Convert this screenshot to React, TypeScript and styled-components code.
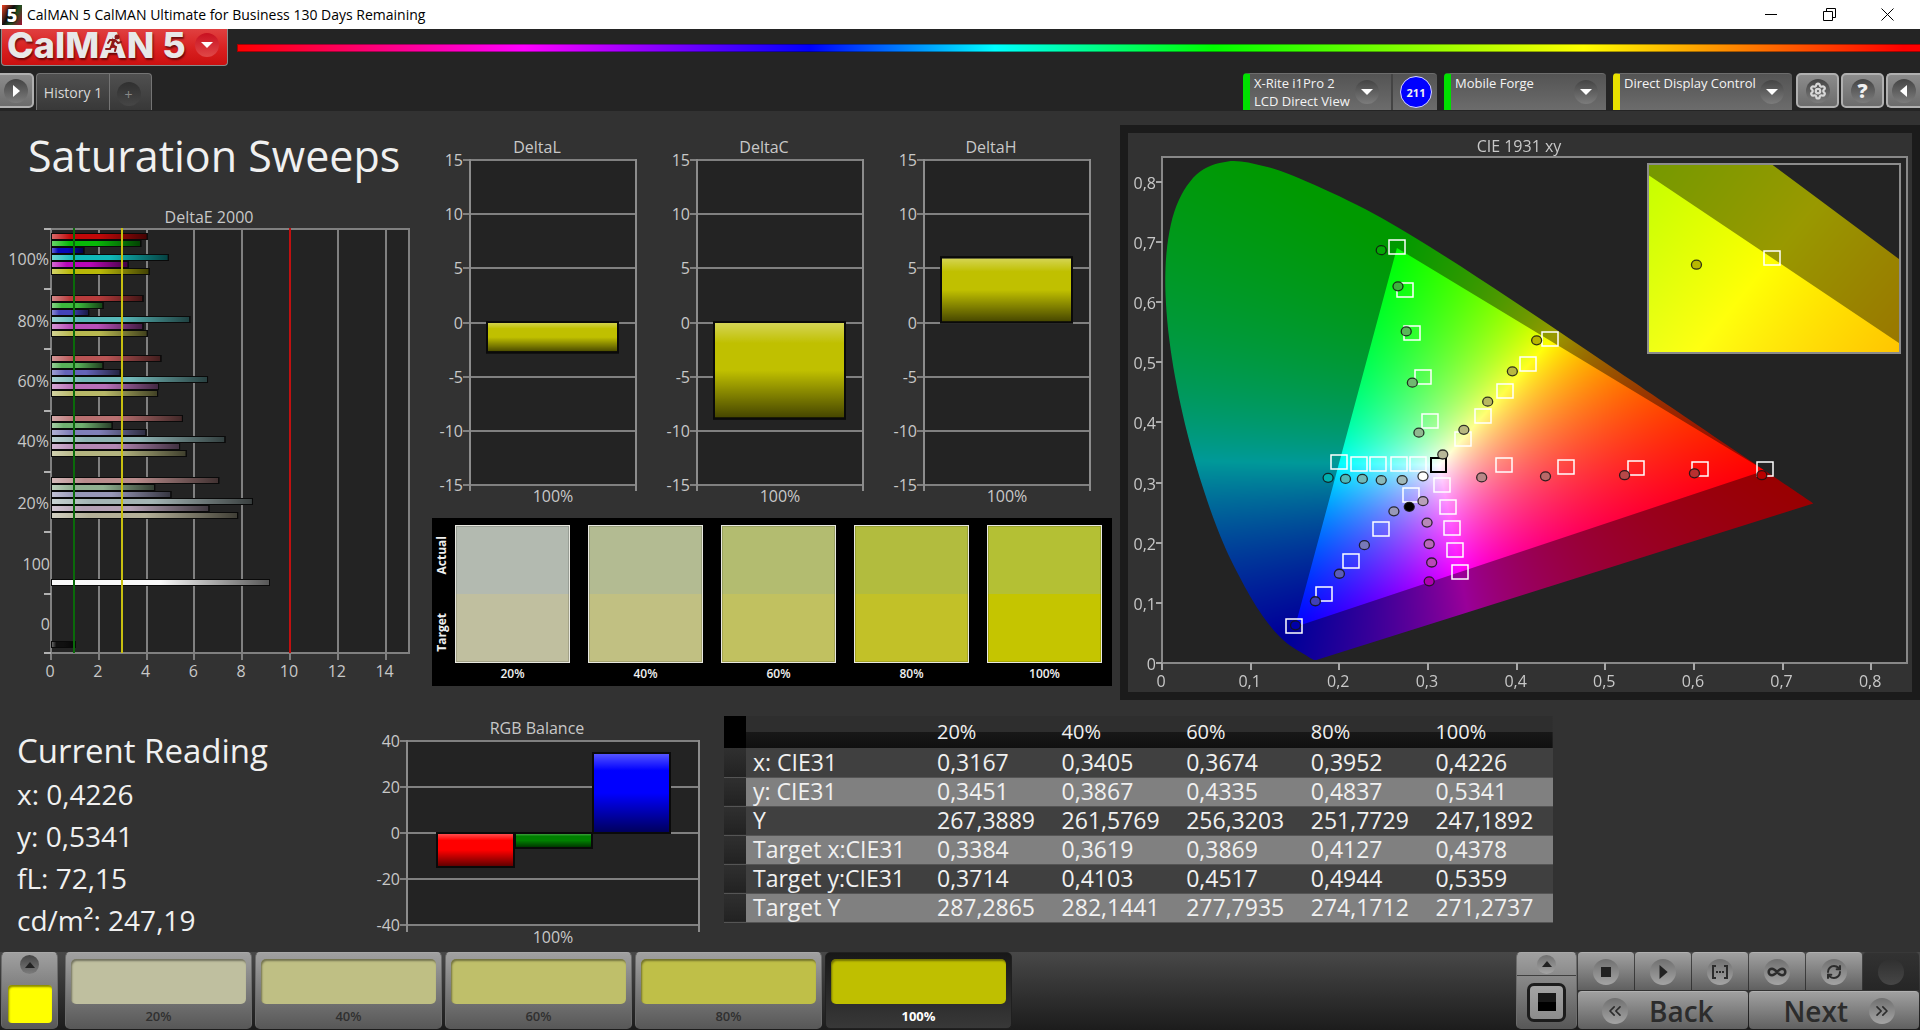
import React, { useEffect, useRef } from "react";
import styled, { createGlobalStyle, css } from "styled-components";
import { ChevronsLeft, ChevronsRight, Infinity as InfinityIcon, RefreshCw, Settings } from "lucide-react";

const GlobalStyle = createGlobalStyle`
  *, *::before, *::after { box-sizing: border-box; }
  body {
    margin: 0;
    background: #323232;
    color: #f0f0f0;
    font-family: "Open Sans", "Noto Sans", sans-serif;
  }
  button { font: inherit; color: inherit; padding: 0; border: 0; cursor: pointer; }
  h1, h2, p { margin: 0; font-weight: 400; }
`;

/* ---------- window frame ---------- */

const Page = styled.div`
  display: flex;
  flex-direction: column;
  min-height: 100vh;
`;

const TitleBar = styled.div`
  display: flex;
  align-items: center;
  height: 29px;
  padding: 0 4px 0 2px;
  background: #fff;
  color: #000;
  font-size: 14px;
`;

const AppIcon = styled.span`
  display: grid;
  place-items: center;
  width: 20px;
  height: 20px;
  margin-right: 5px;
  background: linear-gradient(120deg, #f04020, #111 40%, #205020 60%, #a01030);
  color: #fff;
  font-weight: 800;
  font-size: 18px;
  line-height: 20px;
  text-shadow: 0 0 2px #000, 0 0 2px #000;
`;

const WindowButtons = styled.div`
  display: flex;
  margin-left: auto;
`;

const WindowButton = styled.button`
  display: grid;
  place-items: center;
  width: 58px;
  height: 29px;
  background: none;
`;

/* ---------- header ---------- */

const Header = styled.header`
  background: #242424;
`;

const BrandRow = styled.div`
  display: flex;
  align-items: center;
  gap: 9px;
  height: 37px;
  padding-left: 1px;
`;

const Brand = styled.button`
  display: flex;
  align-items: center;
  justify-content: space-between;
  width: 227px;
  height: 37px;
  padding: 0 8px 4px 5px;
  border: 1px solid #8a8a8a;
  border-top: 0;
  border-radius: 0 0 4px 4px;
  background: linear-gradient(#e04040, #d82020 55%, #cc1010);
`;

const BrandName = styled.span`
  position: relative;
  font-family: Inter, sans-serif;
  font-weight: 800;
  font-size: 36px;
  line-height: 30px;
  color: #e8e8e8;
  text-shadow: 1px 2px 2px rgba(60, 0, 0, 0.7);
`;

const Runner = styled.svg`
  position: absolute;
  left: 98px;
  top: 4px;
`;

const Spectrum = styled.div`
  flex: 1;
  height: 8px;
  margin-top: 1px;
  border: 1px solid rgba(0, 0, 0, 0.35);
  border-right: 0;
  background: linear-gradient(90deg, #f00, #f0f 17%, #00f 34%, #0ff 45%, #0f0 58%, #ff0 80%, #f00 99%);
`;

const TabRow = styled.div`
  display: flex;
  justify-content: space-between;
  height: 45px;
  padding-top: 7px;
`;

const Tabs = styled.nav`
  display: flex;
`;

const Tab = styled.button<{ $width: number }>`
  display: grid;
  place-items: center;
  width: ${(p) => p.$width}px;
  height: 37px;
  border: 1px solid #747474;
  border-bottom: 0;
  border-right-width: 0;
  background: linear-gradient(#505050, #383838);
  color: #d8d8d8;
  font-size: 14px;
  font-weight: 500;
  &:nth-of-type(2) { border-radius: 4px 0 0 0; }
  &:last-of-type { border-radius: 0 4px 0 0; border-right-width: 1px; padding: 4px 4px 0 0; color: #888; }
`;

const SquareButton = styled.button<{ $edge?: "left" | "right" }>`
  display: grid;
  place-items: center;
  width: ${(p) => (p.$edge ? 34 : 43)}px;
  height: 35px;
  border: 2px solid #b0b0b0;
  border-radius: 5px;
  background: linear-gradient(#8c8c8c, #6c6c6c);
  ${(p) => p.$edge === "left" && css`border-left: 0; border-radius: 0 5px 5px 0; margin-right: 2px;`}
  ${(p) => p.$edge === "right" && css`border-right: 0; border-radius: 5px 0 0 5px;`}
`;

const Disc = styled.span<{ $size: number; $tone?: "dark" | "red" | "light" | "dim" }>`
  display: grid;
  place-items: center;
  width: ${(p) => p.$size}px;
  height: ${(p) => p.$size}px;
  border-radius: 50%;
  background: ${(p) =>
    p.$tone === "red"
      ? "linear-gradient(#c81020, #e04848)"
      : p.$tone === "light"
      ? "linear-gradient(#707070, #a4a4a4)"
      : p.$tone === "dim"
      ? "linear-gradient(#303030, #464646)"
      : "linear-gradient(#444, #7c7c7c)"};
`;

const Devices = styled.div`
  display: flex;
  gap: 2px;
`;

const Device = styled.div<{ $width: number; $accent: string }>`
  display: flex;
  width: ${(p) => p.$width}px;
  height: 37px;
  margin-right: 5px;
  border-left: 7px solid ${(p) => p.$accent};
  border-top: 1px solid #6c6c6c;
  border-radius: 4px 4px 0 0;
  background: linear-gradient(#545454, #6c6c6c);
  overflow: hidden;
  &:last-of-type { margin-right: 2px; }
`;

const DeviceButton = styled.button`
  display: flex;
  flex: 1;
  align-items: flex-start;
  justify-content: space-between;
  padding: 0 8px 0 4px;
  background: none;
  color: #f4f4f4;
  font-size: 13px;
  line-height: 18px;
  text-align: left;
  white-space: nowrap;
  &:not(:last-child) { padding-right: 12px; }
`;

const DeviceText = styled.span`
  display: block;
`;

const CaretSlot = styled.span`
  padding-top: 6px;
  margin-left: -2px;
`;

const Counter = styled.div`
  display: grid;
  place-items: center;
  width: 46px;
  padding-left: 2px;
  border-left: 2px solid #444;
`;

const CounterDisc = styled.span`
  display: grid;
  place-items: center;
  width: 32px;
  height: 32px;
  border: 1px solid #d8d8ff;
  border-radius: 50%;
  background: #00f;
  font-size: 11px;
  font-weight: 700;
`;

const HelpMark = styled.span`
  font-size: 20px;
  line-height: 24px;
  font-weight: 800;
`;

/* ---------- main area ---------- */

const Main = styled.main`
  flex: 1;
  border-left: 1px solid #242424;
  margin-left: -1px;
`;

const TopGrid = styled.section`
  display: grid;
  grid-template-columns: 430fr 690fr 800fr;
  align-items: start;
`;

const BottomGrid = styled.section`
  display: grid;
  grid-template-columns: 360fr 364fr 829fr 367fr;
  align-items: start;
  padding-top: 16px;
`;

const PageTitle = styled.h1`
  padding: 17px 0 16px 28px;
  font-size: 43px;
  line-height: 56px;
`;

const ChartSvg = styled.svg`
  display: block;
  width: 100%;
  height: auto;
  fill: #c8c8c8;
  font-size: 16px;
`;

const DeltaColumn = styled.div`
  padding: 23px 8px 0 2px;
`;

const DeltaCharts = styled.div`
  display: grid;
  grid-template-columns: repeat(3, 1fr);
  margin-left: -2px;
  margin-right: 1px;
`;

const SwatchPanel = styled.div`
  display: grid;
  grid-template-columns: 5px repeat(5, minmax(0, 1fr));
  column-gap: 18px;
  height: 168px;
  margin-top: 8px;
  padding: 7px 10px 0 0;
  background: #000;
  font-size: 12px;
  font-weight: 600;
`;

const SideLabels = styled.div`
  display: flex;
  flex-direction: column;
  justify-content: space-between;
  height: 138px;
  margin-right: -18px;
  padding: 11px 0;
`;

const SideLabel = styled.span`
  writing-mode: vertical-rl;
  transform: rotate(180deg);
  width: 20px;
  font-size: 12px;
  line-height: 20px;
  font-weight: 700;
`;

const SwatchItem = styled.div`
  display: flex;
  flex-direction: column;
  text-align: center;
  line-height: 22px;
`;

const Swatch = styled.div<{ $actual: string; $target: string }>`
  height: 138px;
  border: 1px solid #e8e8e0;
  box-shadow: inset 0 0 0 1px rgba(0, 0, 0, 0.15);
  background: linear-gradient(${(p) => p.$actual} 50%, ${(p) => p.$target} 50%);
`;

const CieFrame = styled.div`
  margin-top: 14px;
  border: 8px solid #1b1b1b;
  display: grid;
`;

const CieCanvas = styled.canvas`
  grid-area: 1 / 1;
  width: 100%;
  height: 100%;
`;

const CieOverlay = styled(ChartSvg)`
  grid-area: 1 / 1;
  z-index: 1;
`;

const Readings = styled.div`
  padding: 12px 0 0 17px;
`;

const ReadingTitle = styled.h2`
  font-size: 33px;
  line-height: 45px;
`;

const Reading = styled.p`
  font-size: 28px;
  line-height: 42px;
`;

const DataTable = styled.table`
  width: 100%;
  table-layout: fixed;
  border-collapse: collapse;
  font-size: 23px;
  line-height: 26px;
  text-align: left;
  th, td { padding: 0 0 1px 7px; font-weight: 400; white-space: nowrap; }
`;

const HeadRow = styled.tr`
  height: 32px;
  font-size: 20px;
  background: linear-gradient(#2e2e2e 50%, #181818 50%, #101010);
  th:first-child { background: #000; }
`;

const BodyRow = styled.tr`
  height: 29px;
  background: #404040;
  border-bottom: 1px solid #555;
  &:nth-child(even) { background: #808080; }
  td:first-child { background: linear-gradient(#303030, #222); }
`;

/* ---------- footer ---------- */

const Footer = styled.footer`
  display: flex;
  justify-content: space-between;
  height: 78px;
  background: linear-gradient(#484848, #1c1c1c);
`;

const raised = css`
  background: linear-gradient(#a0a0a0, #585858);
  border: 1px solid #8a8a8a;
  border-color: #a8a8a8 #6c6c6c #585858 #6c6c6c;
  border-radius: 5px;
`;

const Patches = styled.div`
  display: flex;
  gap: 3px;
  padding-left: 1px;
`;

const CurrentPatch = styled.button`
  ${raised}
  display: flex;
  flex-direction: column;
  align-items: center;
  justify-content: space-between;
  width: 57px;
  height: 77px;
  padding: 2px 0 5px;
  margin-right: 4px;
`;

const CurrentColor = styled.span`
  width: 44px;
  height: 38px;
  border-radius: 4px;
  background: #ff0;
  box-shadow: inset 1px 2px 2px rgba(60, 60, 0, 0.6);
`;

const PatchButton = styled.button<{ $active?: boolean }>`
  ${raised}
  display: flex;
  flex-direction: column;
  width: 187px;
  height: 77px;
  padding: 6px 5px 0;
  color: #303030;
  font-size: 13px;
  line-height: 24px;
  font-weight: 600;
  ${(p) =>
    p.$active &&
    css`
      background: linear-gradient(#181818, #383838);
      border-color: #202020;
      color: #fff;
      font-weight: 700;
    `}
`;

const PatchColor = styled.span<{ $color: string }>`
  height: 46px;
  border-radius: 5px;
  background: ${(p) => p.$color};
  box-shadow: inset 1px 2px 2px rgba(0, 0, 0, 0.4);
`;

const Transport = styled.div`
  display: flex;
  padding-right: 1px;
  color: #2c2c2c;
`;

const ModePanel = styled.div`
  ${raised}
  display: flex;
  flex-direction: column;
  width: 61px;
  height: 77px;
  margin-right: 1px;
  overflow: hidden;
`;

const ModeToggle = styled.button`
  display: grid;
  place-items: center;
  height: 23px;
  background: none;
  border-bottom: 1px solid #404040;
`;

const ModeButton = styled.button`
  display: grid;
  place-items: center;
  flex: 1;
  background: none;
`;

const ModeGlyph = styled.span`
  display: grid;
  place-items: center;
  width: 39px;
  height: 39px;
  border: 3px solid #1c1c1c;
  border-radius: 7px;
  background: linear-gradient(#a4a4a4, #8c8c8c);
  &::after {
    content: "";
    width: 18px;
    height: 18px;
    background: linear-gradient(#181818 50%, #000 50%);
  }
`;

const TransportGrid = styled.div`
  display: grid;
  grid-template-columns: repeat(6, 56px);
  grid-template-rows: 38px 38px;
  gap: 1px;
`;

const TransportButton = styled.button<{ $dim?: boolean }>`
  display: grid;
  place-items: center;
  background: ${(p) => (p.$dim ? "linear-gradient(#323232, #262626)" : "linear-gradient(#a0a0a0, #606060)")};
  border-top: 1px solid ${(p) => (p.$dim ? "#383838" : "#b0b0b0")};
  border-radius: 4px 4px 0 0;
`;

const NavButton = styled(TransportButton)<{ $side: "back" | "next" }>`
  grid-column: span 3;
  display: flex;
  align-items: center;
  justify-content: ${(p) => (p.$side === "back" ? "flex-start" : "flex-end")};
  gap: 21px;
  padding: 0 24px;
  font-size: 28px;
  line-height: 36px;
  font-weight: 600;
  border-radius: 4px;
`;

/* ---------- colour and chart data ---------- */

type XY = [number, number];

const HUES = ["red", "green", "blue", "cyan", "magenta", "yellow"];

const DELTA_E: { label: string; y: number; bars: number[]; colors: string[] }[] = [
  { label: "100%", y: 36, bars: [4.05, 3.78, 1.4, 4.93, 3.25, 4.13], colors: ["#c00808", "#08b808", "#0808b8", "#10b8b8", "#b808b8", "#b8b808"] },
  { label: "80%", y: 98, bars: [3.87, 2.2, 1.6, 5.83, 3.87, 4.05], colors: ["#b83c3c", "#3cb83c", "#4444b8", "#58b8b8", "#b850b8", "#b8b850"] },
  { label: "60%", y: 158, bars: [4.62, 2.2, 2.92, 6.57, 4.52, 4.48], colors: ["#b85454", "#58b058", "#6464b8", "#74b8b8", "#b870b8", "#b8b868"] },
  { label: "40%", y: 218, bars: [5.52, 2.58, 4.0, 7.3, 5.4, 5.68], colors: ["#b87070", "#70b070", "#8080b8", "#90b4b4", "#b488b4", "#b4b480"] },
  { label: "20%", y: 280, bars: [7.04, 4.36, 5.04, 8.45, 6.63, 7.83], colors: ["#b88c8c", "#90b090", "#9898b8", "#a4b4b4", "#b4a0b4", "#b4b098"] },
];

const PRIMARIES: { r: XY; g: XY; b: XY } = { r: [0.68, 0.32], g: [0.265, 0.69], b: [0.15, 0.06] };
const WHITE: XY = [0.3127, 0.329];

const LOCUS: XY[] = [
  [0.1741, 0.005], [0.1714, 0.0051], [0.1689, 0.0069], [0.1644, 0.0109], [0.1566, 0.0177], [0.144, 0.0297],
  [0.1355, 0.0399], [0.1241, 0.0578], [0.1096, 0.0868], [0.0913, 0.1327], [0.0687, 0.2007], [0.0454, 0.295],
  [0.0235, 0.4127], [0.0082, 0.5384], [0.0039, 0.6548], [0.0139, 0.7502], [0.0389, 0.812], [0.0743, 0.8338],
  [0.1142, 0.8262], [0.1547, 0.8059], [0.2296, 0.7543], [0.3016, 0.6923], [0.3731, 0.6245], [0.4441, 0.5547],
  [0.5125, 0.4866], [0.5752, 0.4242], [0.627, 0.3725], [0.6658, 0.334], [0.6915, 0.3083], [0.719, 0.2809],
  [0.7347, 0.2653],
];

const TARGETS: XY[] = [
  [0.265, 0.691], [0.2743, 0.6206], [0.2824, 0.548], [0.2939, 0.4761], [0.3025, 0.4017],
  [0.4378, 0.5385], [0.4127, 0.4968], [0.3869, 0.4525], [0.3619, 0.411], [0.3394, 0.373],
  [0.1995, 0.3341], [0.2225, 0.331], [0.2438, 0.331], [0.2668, 0.331], [0.2893, 0.331],
  [0.3854, 0.3291], [0.4556, 0.3266], [0.535, 0.3247], [0.6069, 0.3222], [0.6806, 0.3222],
  [0.3163, 0.2966], [0.3221, 0.2591], [0.3267, 0.2247], [0.3301, 0.1871], [0.3365, 0.1521],
  [0.2812, 0.2785], [0.2473, 0.2222], [0.2133, 0.1696], [0.1822, 0.1152], [0.1488, 0.0608],
];

const MEASURED: [number, number, string][] = [
  [0.2473, 0.6863, "#04a804"], [0.2662, 0.6262, "#3cb43c"], [0.2755, 0.5512, "#58b858"], [0.2824, 0.4661, "#70b870"], [0.2898, 0.3829, "#90b890"],
  [0.4226, 0.5365, "#b8b800"], [0.3952, 0.4849, "#b8b840"], [0.3674, 0.4345, "#b8b860"], [0.3405, 0.3877, "#b8b880"], [0.3167, 0.3466, "#b8b898"],
  [0.1874, 0.3078, "#00b0b0"], [0.207, 0.306, "#50b8b8"], [0.226, 0.306, "#70b8b8"], [0.2473, 0.3041, "#88b8b8"], [0.2709, 0.3041, "#a0b8b8"],
  [0.2944, 0.3104, "#ffffff"],
  [0.3606, 0.3085, "#b88888"], [0.4326, 0.3104, "#b86868"], [0.5218, 0.3122, "#b84848"], [0.6006, 0.3154, "#b83030"], [0.6766, 0.3122, "#b80000"],
  [0.2944, 0.2691, "#b8a0b8"], [0.299, 0.2334, "#b888b8"], [0.3014, 0.1978, "#b868b8"], [0.3042, 0.1671, "#b848b8"], [0.3014, 0.1358, "#b000b0"],
  [0.2789, 0.2597, "#000000"],
  [0.2616, 0.2522, "#9898b8"], [0.2283, 0.1959, "#7878b8"], [0.2001, 0.1484, "#5c5cb8"], [0.173, 0.1027, "#4040b8"], [0.1506, 0.0626, "#0000a8"],
];

const TABLE_HEAD = ["20%", "40%", "60%", "80%", "100%"];
const TABLE_ROWS: [string, string[]][] = [
  ["x: CIE31", ["0,3167", "0,3405", "0,3674", "0,3952", "0,4226"]],
  ["y: CIE31", ["0,3451", "0,3867", "0,4335", "0,4837", "0,5341"]],
  ["Y", ["267,3889", "261,5769", "256,3203", "251,7729", "247,1892"]],
  ["Target x:CIE31", ["0,3384", "0,3619", "0,3869", "0,4127", "0,4378"]],
  ["Target y:CIE31", ["0,3714", "0,4103", "0,4517", "0,4944", "0,5359"]],
  ["Target Y", ["287,2865", "282,1441", "277,7935", "274,1712", "271,2737"]],
];

const SWATCHES = [
  { label: "20%", actual: "#b3bab0", target: "#c0bf9f", patch: "#bfbf9f" },
  { label: "40%", actual: "#b3bb92", target: "#c1c082", patch: "#bfbf84" },
  { label: "60%", actual: "#b3bc70", target: "#c1c160", patch: "#bfbf6a" },
  { label: "80%", actual: "#b2bc3e", target: "#c2c128", patch: "#bfbf48" },
  { label: "100%", actual: "#b4c034", target: "#c5c500", patch: "#bfbf00" },
];

/* ---------- charts ---------- */

const Gloss = () => (
  <defs>
    <linearGradient id="glossX" x1="0" x2="1" y1="0" y2="0">
      <stop offset="0" stopColor="#fff" stopOpacity="0.4" />
      <stop offset="0.2" stopColor="#fff" stopOpacity="0" />
      <stop offset="0.5" stopColor="#000" stopOpacity="0" />
      <stop offset="1" stopColor="#000" stopOpacity="0.65" />
    </linearGradient>
    <linearGradient id="glossY" x1="0" x2="0" y1="0" y2="1">
      <stop offset="0" stopColor="#fff" stopOpacity="0.35" />
      <stop offset="0.22" stopColor="#fff" stopOpacity="0" />
      <stop offset="0.5" stopColor="#000" stopOpacity="0" />
      <stop offset="1" stopColor="#000" stopOpacity="0.65" />
    </linearGradient>
  </defs>
);

function GlossBar({ x, y, w, h, color, axis }: { x: number; y: number; w: number; h: number; color: string; axis: "X" | "Y" }) {
  return (
    <g stroke="#0a0a0a" strokeWidth={axis === "X" ? 1 : 2}>
      <rect x={x} y={y} width={w} height={h} fill={color} />
      <rect x={x} y={y} width={w} height={h} fill={`url(#gloss${axis})`} />
    </g>
  );
}

function DeltaEChart() {
  const px = (v: number) => 51 + v * 23.9;
  return (
    <ChartSvg viewBox="0 0 430 490" role="img" aria-label="DeltaE 2000">
      <Gloss />
      <text x="209" y="23" textAnchor="middle">DeltaE 2000</text>
      <rect x="51" y="29" width="358" height="424" fill="#232323" stroke="#808080" strokeWidth="2" />
      {[0, 2, 4, 6, 8, 10, 12, 14].map((v) => (
        <g key={v}>
          <path d={`M${Math.round(px(v))} 29V460`} stroke="#808080" strokeWidth="2" />
          <text x={px(v) - 1} y="477" textAnchor="middle">{v}</text>
        </g>
      ))}
      {[29, 89, 149, 211, 272, 332, 394, 453].map((y) => (
        <path key={y} d={`M44 ${y}H51`} stroke="#b0b0b0" strokeWidth="2" />
      ))}
      {DELTA_E.map((group) => (
        <g key={group.label}>
          <text x="49" y={group.y + 29} textAnchor="end">{group.label}</text>
          {group.bars.map((v, i) => (
            <GlossBar key={HUES[i]} x={51.5} y={group.y - 2.5 + i * 7} w={v * 23.9 - 1} h={6} color={group.colors[i]} axis="X" />
          ))}
        </g>
      ))}
      <text x="50" y="370" textAnchor="end">100</text>
      <text x="50" y="430" textAnchor="end">0</text>
      <GlossBar x={51.5} y={379.5} w={218} h={6} color="#f8f8f8" axis="X" />
      <GlossBar x={51.5} y={441.5} w={24} h={6} color="#101010" axis="X" />
      <path d="M74 28V453" stroke="#0a6a0a" strokeWidth="2" />
      <path d="M122 28V453" stroke="#c8c010" strokeWidth="2" />
      <path d="M290 28V453" stroke="#c01010" strokeWidth="2" />
    </ChartSvg>
  );
}

function DeltaChart({ title, value }: { title: string; value: number }) {
  const py = (v: number) => 188.5 - v * 10.85;
  return (
    <ChartSvg viewBox="0 0 227 376" role="img" aria-label={title}>
      <text x="107" y="19" textAnchor="middle">{title}</text>
      <rect x="40" y="26" width="166" height="325" fill="#232323" />
      {[15, 10, 5, 0, -5, -10, -15].map((v) => (
        <g key={v}>
          <path d={`M33 ${Math.round(py(v))}H206`} stroke="#808080" strokeWidth="2" />
          <text x="33" y={Math.round(py(v)) + 6} textAnchor="end">{v}</text>
        </g>
      ))}
      <path d="M40 25V357M206 25V357" stroke="#8c8c8c" strokeWidth="2" />
      <GlossBar x={57} y={value > 0 ? py(value) : 188} w={131} h={Math.abs(value) * 10.85} color="#c0c000" axis="Y" />
      <text x="123" y="368" textAnchor="middle">100%</text>
    </ChartSvg>
  );
}

function RgbChart() {
  const py = (v: number) => 117 - v * 2.31;
  return (
    <ChartSvg viewBox="0 0 364 236" role="img" aria-label="RGB Balance">
      <text x="177" y="18" textAnchor="middle">RGB Balance</text>
      <rect x="47" y="24" width="292" height="186" fill="#232323" />
      {[40, 20, 0, -20, -40].map((v) => (
        <g key={v}>
          <path d={`M40 ${Math.round(py(v))}H339`} stroke="#808080" strokeWidth="2" />
          <text x="40" y={Math.round(py(v)) + 6} textAnchor="end">{v}</text>
        </g>
      ))}
      <path d="M47 24V216M339 24V216" stroke="#8c8c8c" strokeWidth="2" />
      <GlossBar x={77} y={117} w={77} h={34} color="#ff0000" axis="Y" />
      <GlossBar x={155} y={117} w={77} h={15} color="#008000" axis="Y" />
      <GlossBar x={233} y={37} w={77} h={80} color="#0000ff" axis="Y" />
      <text x="193" y="227" textAnchor="middle">100%</text>
    </ChartSvg>
  );
}

/* ---------- CIE diagram ---------- */

const CIE_W = 784;
const CIE_H = 559;

interface View { left: number; top: number; width: number; height: number; x0: number; y0: number; sx: number; sy: number; }

const PLOT: View = { left: 34, top: 24, width: 745, height: 506, x0: 34, y0: 530, sx: 886.5, sy: 601.5 };
const INSET: View = { left: 520, top: 31, width: 252, height: 189, x0: 644 - 0.4378 * 4970, y0: 125 + 0.5359 * 3735, sx: 4970, sy: 3735 };

const toPixel = (v: View, [x, y]: XY): XY => [v.x0 + x * v.sx, v.y0 - y * v.sy];

function barycentric([x, y]: XY): [number, number, number] {
  const { r, g, b } = PRIMARIES;
  const det = (g[1] - b[1]) * (r[0] - b[0]) + (b[0] - g[0]) * (r[1] - b[1]);
  const wr = ((g[1] - b[1]) * (x - b[0]) + (b[0] - g[0]) * (y - b[1])) / det;
  const wg = ((b[1] - r[1]) * (x - b[0]) + (r[0] - b[0]) * (y - b[1])) / det;
  return [wr, wg, 1 - wr - wg];
}

function tracePolygon(ctx: CanvasRenderingContext2D, v: View, points: XY[], smooth: boolean) {
  const p = points.map((q) => toPixel(v, q));
  const at = (i: number) => p[Math.max(0, Math.min(p.length - 1, i))];
  ctx.moveTo(p[0][0], p[0][1]);
  for (let i = 0; i < p.length - 1; i++) {
    const [a, b, c, d] = [at(i - 1), at(i), at(i + 1), at(i + 2)];
    if (smooth) {
      ctx.bezierCurveTo(b[0] + (c[0] - a[0]) / 6, b[1] + (c[1] - a[1]) / 6, c[0] - (d[0] - b[0]) / 6, c[1] - (d[1] - b[1]) / 6, c[0], c[1]);
    } else {
      ctx.lineTo(c[0], c[1]);
    }
  }
  ctx.closePath();
}

/* Brightest colour at each chromaticity, dimmed outside the display gamut and cut to the spectral locus. */
function paintView(target: CanvasRenderingContext2D, v: View) {
  const layer = document.createElement("canvas");
  layer.width = CIE_W;
  layer.height = CIE_H;
  const ctx = layer.getContext("2d");
  if (!ctx) return;
  const white = barycentric(WHITE);
  const image = ctx.createImageData(v.width, v.height);
  for (let j = 0; j < v.height; j++) {
    for (let i = 0; i < v.width; i++) {
      const x = (v.left + i + 0.5 - v.x0) / v.sx;
      const y = (v.y0 - v.top - j - 0.5) / v.sy;
      const rgb = barycentric([x, y]).map((w, k) => Math.max(0, w / white[k]));
      const scale = 255 / Math.max(rgb[0], rgb[1], rgb[2]);
      const o = (j * v.width + i) * 4;
      image.data[o] = rgb[0] * scale;
      image.data[o + 1] = rgb[1] * scale;
      image.data[o + 2] = rgb[2] * scale;
      image.data[o + 3] = 255;
    }
  }
  ctx.putImageData(image, v.left, v.top);
  ctx.globalCompositeOperation = "source-atop";
  ctx.fillStyle = "rgba(0, 0, 0, 0.4)";
  ctx.beginPath();
  ctx.rect(0, 0, CIE_W, CIE_H);
  tracePolygon(ctx, v, [PRIMARIES.r, PRIMARIES.g, PRIMARIES.b], false);
  ctx.fill("evenodd");
  ctx.globalCompositeOperation = "destination-in";
  ctx.fillStyle = "#000";
  ctx.beginPath();
  tracePolygon(ctx, v, LOCUS, true);
  ctx.fill();
  target.fillStyle = "#232323";
  target.fillRect(v.left, v.top, v.width, v.height);
  target.drawImage(layer, 0, 0);
}

const TargetBox = ({ at, dark }: { at: XY; dark?: boolean }) => (
  <rect x={Math.round(at[0]) - 8} y={Math.round(at[1]) - 7} width={dark ? 15 : 16} height="14" fill="none" stroke={dark ? "#000" : "#fff"} strokeWidth={dark ? 2 : 1.5} />
);

const MeasuredDot = ({ at, color }: { at: XY; color: string }) => (
  <ellipse cx={at[0]} cy={at[1]} rx="5" ry="4.5" fill={color} stroke="#141414" strokeOpacity="0.85" strokeWidth="1.3" />
);

function CieDiagram() {
  const ref = useRef<HTMLCanvasElement>(null);
  useEffect(() => {
    const ctx = ref.current?.getContext("2d");
    if (!ctx) return;
    ctx.clearRect(0, 0, CIE_W, CIE_H);
    paintView(ctx, PLOT);
    paintView(ctx, INSET);
  }, []);
  const ticks = [0, 1, 2, 3, 4, 5, 6, 7, 8];
  const name = (t: number) => (t === 0 ? "0" : `0,${t}`);
  return (
    <CieFrame>
      <CieCanvas ref={ref} width={CIE_W} height={CIE_H} />
      <CieOverlay viewBox={`0 0 ${CIE_W} ${CIE_H}`} role="img" aria-label="CIE 1931 xy chromaticity diagram">
        <text x="391" y="19" textAnchor="middle">CIE 1931 xy</text>
        <rect x="34" y="24" width="745" height="506" fill="none" stroke="#888" strokeWidth="2" />
        {ticks.map((t) => {
          const [x, y] = toPixel(PLOT, [t / 10, t / 10]);
          return (
            <g key={t}>
              <path d={`M${Math.round(x)} 530V537M28 ${Math.round(y)}H34`} stroke="#a8a8a8" strokeWidth="2" />
              <text x={x - 1} y="554" textAnchor="middle">{name(t)}</text>
              <text x="28" y={y + 7} textAnchor="end">{name(t)}</text>
            </g>
          );
        })}
        {TARGETS.map((t) => <TargetBox key={t.join()} at={toPixel(PLOT, t)} />)}
        <TargetBox at={toPixel(PLOT, WHITE)} dark />
        {MEASURED.map(([x, y, c]) => <MeasuredDot key={`${x}${y}`} at={toPixel(PLOT, [x, y])} color={c} />)}
        <rect x="520" y="31" width="252" height="189" fill="none" stroke="#8c8c8c" strokeWidth="2" />
        <TargetBox at={toPixel(INSET, [0.4378, 0.5359])} />
        <MeasuredDot at={toPixel(INSET, [0.4226, 0.5341])} color="#b8b800" />
      </CieOverlay>
    </CieFrame>
  );
}

/* ---------- small glyphs ---------- */

const Triangle = ({ d, size = 12, fill = "#fff" }: { d: string; size?: number; fill?: string }) => (
  <svg width={size} height={size} viewBox="0 0 12 12" aria-hidden="true"><path d={d} fill={fill} /></svg>
);
const DOWN = "M0 3h12L6 9z";
const UP = "M1 9h10L6 3z";
const RIGHT = "M3 0v12l7-6z";
const LEFT = "M9 0v12L2 6z";

function DevicePicker({ lines }: { lines: string[] }) {
  return (
    <DeviceButton aria-haspopup="menu">
      <span>{lines.map((l) => <DeviceText key={l}>{l}</DeviceText>)}</span>
      <CaretSlot><Disc $size={24}><Triangle d={DOWN} /></Disc></CaretSlot>
    </DeviceButton>
  );
}

export default function App() {
  return (
    <Page>
      <GlobalStyle />
      <TitleBar>
        <AppIcon>5</AppIcon>
        <span>CalMAN 5 CalMAN Ultimate for Business 130 Days Remaining</span>
        <WindowButtons>
          <WindowButton aria-label="Minimize"><svg width="12" height="12"><path d="M0 5.5h12" stroke="#000" /></svg></WindowButton>
          <WindowButton aria-label="Restore"><svg width="13" height="13" fill="none" stroke="#000"><path d="M.5 3.5h9v9h-9zM3.500 3.500v-3h9v9h-3" /></svg></WindowButton>
          <WindowButton aria-label="Close"><svg width="13" height="13" stroke="#000"><path d="M.5.5l12 12M12.500.5l-12 12" /></svg></WindowButton>
        </WindowButtons>
      </TitleBar>

      <Header>
        <BrandRow>
          <Brand aria-haspopup="menu">
            <BrandName>
              CalMAN 5
              <Runner width="18" height="20" viewBox="0 0 18 20" fill="none" stroke="#8c1818" strokeWidth="2" strokeLinecap="round">
                <circle cx="12" cy="3" r="1.500" fill="#8c1818" />
                <path d="M10 6L7 11l4 2-1 4M7 11l-2 4-4 0M10 6L5 6 3 9M10 6l3 3 3-1" />
              </Runner>
            </BrandName>
            <Disc $size={24} $tone="red"><Triangle d={DOWN} /></Disc>
          </Brand>
          <Spectrum />
        </BrandRow>
        <TabRow>
          <Tabs>
            <SquareButton $edge="left" aria-label="Expand workflow"><Disc $size={24}><Triangle d={RIGHT} /></Disc></SquareButton>
            <Tab $width={73}>History 1</Tab>
            <Tab $width={43} aria-label="Add history"><Disc $size={24} $tone="dim">+</Disc></Tab>
          </Tabs>
          <Devices>
            <Device $width={194} $accent="#00e000">
              <DevicePicker lines={["X-Rite i1Pro 2", "LCD Direct View"]} />
              <Counter><CounterDisc>211</CounterDisc></Counter>
            </Device>
            <Device $width={162} $accent="#00e000"><DevicePicker lines={["Mobile Forge"]} /></Device>
            <Device $width={179} $accent="#e8e000"><DevicePicker lines={["Direct Display Control"]} /></Device>
            <SquareButton aria-label="Settings"><Disc $size={24}><Settings size={18} strokeWidth={3} color="#d8d8d8" /></Disc></SquareButton>
            <SquareButton aria-label="Help"><Disc $size={24}><HelpMark>?</HelpMark></Disc></SquareButton>
            <SquareButton $edge="right" aria-label="Collapse"><Disc $size={24}><Triangle d={LEFT} /></Disc></SquareButton>
          </Devices>
        </TabRow>
      </Header>

      <Main>
        <TopGrid>
          <div>
            <PageTitle>Saturation Sweeps</PageTitle>
            <DeltaEChart />
          </div>
          <DeltaColumn>
            <DeltaCharts>
              <DeltaChart title="DeltaL" value={-2.8} />
              <DeltaChart title="DeltaC" value={-8.9} />
              <DeltaChart title="DeltaH" value={6} />
            </DeltaCharts>
            <SwatchPanel>
              <SideLabels><SideLabel>Actual</SideLabel><SideLabel>Target</SideLabel></SideLabels>
              {SWATCHES.map((s) => (
                <SwatchItem key={s.label}>
                  <Swatch $actual={s.actual} $target={s.target} />
                  {s.label}
                </SwatchItem>
              ))}
            </SwatchPanel>
          </DeltaColumn>
          <CieDiagram />
        </TopGrid>
        <BottomGrid>
          <Readings>
            <ReadingTitle>Current Reading</ReadingTitle>
            <Reading>x: 0,4226</Reading>
            <Reading>y: 0,5341</Reading>
            <Reading>fL: 72,15</Reading>
            <Reading>cd/m²: 247,19</Reading>
          </Readings>
          <RgbChart />
          <DataTable>
            <colgroup>
              <col style={{ width: `${(22 / 829) * 100}%` }} />
              <col style={{ width: `${(184 / 829) * 100}%` }} />
              {TABLE_HEAD.map((h) => <col key={h} />)}
            </colgroup>
            <thead>
              <HeadRow><th /><th />{TABLE_HEAD.map((h) => <th key={h} scope="col">{h}</th>)}</HeadRow>
            </thead>
            <tbody>
              {TABLE_ROWS.map(([label, cells]) => (
                <BodyRow key={label}>
                  <td />
                  <th scope="row">{label}</th>
                  {cells.map((c) => <td key={c}>{c}</td>)}
                </BodyRow>
              ))}
            </tbody>
          </DataTable>
        </BottomGrid>
      </Main>

      <Footer>
        <Patches>
          <CurrentPatch aria-label="Current patch">
            <Disc $size={19}><Triangle d={UP} fill="#222" /></Disc>
            <CurrentColor />
          </CurrentPatch>
          {SWATCHES.map((s, i) => (
            <PatchButton key={s.label} $active={i === SWATCHES.length - 1}>
              <PatchColor $color={s.patch} />
              {s.label}
            </PatchButton>
          ))}
        </Patches>
        <Transport>
          <ModePanel>
            <ModeToggle aria-label="More modes"><Disc $size={19} $tone="light"><Triangle d={UP} fill="#222" /></Disc></ModeToggle>
            <ModeButton aria-label="Window pattern"><ModeGlyph /></ModeButton>
          </ModePanel>
          <TransportGrid>
            <TransportButton aria-label="Stop"><Disc $size={26} $tone="light"><Triangle d="M1 1h10v10H1z" fill="#222" /></Disc></TransportButton>
            <TransportButton aria-label="Play"><Disc $size={26} $tone="light"><Triangle d={RIGHT} fill="#222" size={14} /></Disc></TransportButton>
            <TransportButton aria-label="Read series">
              <Disc $size={26} $tone="light">
                <svg width="16" height="14" viewBox="0 0 16 14" fill="none" stroke="#2c2c2c" strokeWidth="2"><path d="M4 1H1v12h3M12 1h3v12h-3M4 7h2M7 7h2M10 7h2" /></svg>
              </Disc>
            </TransportButton>
            <TransportButton aria-label="Read continuously"><Disc $size={26} $tone="light"><InfinityIcon size={20} strokeWidth={3} /></Disc></TransportButton>
            <TransportButton aria-label="Repeat"><Disc $size={26} $tone="light"><RefreshCw size={16} strokeWidth={3} /></Disc></TransportButton>
            <TransportButton $dim disabled aria-label="Unavailable"><Disc $size={26} $tone="dim" /></TransportButton>
            <NavButton $side="back"><Disc $size={26} $tone="light"><ChevronsLeft size={20} /></Disc>Back</NavButton>
            <NavButton $side="next">Next<Disc $size={26} $tone="light"><ChevronsRight size={20} /></Disc></NavButton>
          </TransportGrid>
        </Transport>
      </Footer>
    </Page>
  );
}
